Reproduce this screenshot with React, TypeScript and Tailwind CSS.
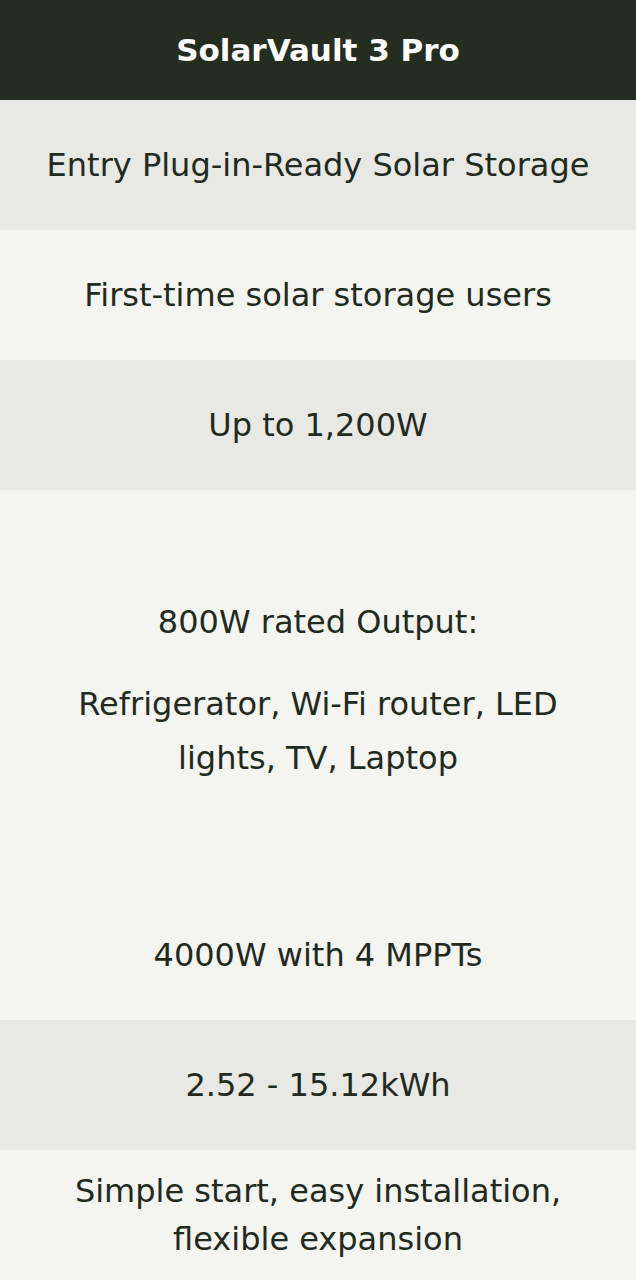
import React from "react";

const font = { fontFamily: '"DejaVu Sans", "Open Sans", sans-serif' };

const Row = ({ tone, children }: { tone: "gray" | "light"; children: React.ReactNode }) => (
  <div
    className={`flex h-[130px] items-center justify-center px-4 text-center ${
      tone === "gray" ? "bg-[#e8e8e5]" : "bg-[#f4f4f0]"
    }`}
  >
    {children}
  </div>
);

export default function App() {
  return (
    <div className="w-[636px] text-[32px] text-[#222a20]" style={font}>
      <div className="flex h-[100px] items-center justify-center bg-[#242d20] text-[31px] font-bold text-white">
        SolarVault 3 Pro
      </div>
      <Row tone="gray">Entry Plug-in-Ready Solar Storage</Row>
      <Row tone="light">First-time solar storage users</Row>
      <Row tone="gray">Up to 1,200W</Row>
      <div className="flex h-[400px] flex-col items-center justify-center gap-[28px] bg-[#f4f4f0] px-[60px] text-center leading-[54px]">
        <p>800W rated Output:</p>
        <p>Refrigerator, Wi-Fi router, LED lights, TV, Laptop</p>
      </div>
      <Row tone="light">4000W with 4 MPPTs</Row>
      <Row tone="gray">2.52 - 15.12kWh</Row>
      <div className="flex h-[130px] items-center justify-center bg-[#f4f4f0] px-[60px] text-center leading-[48px]">
        Simple start, easy installation, flexible expansion
      </div>
    </div>
  );
}
